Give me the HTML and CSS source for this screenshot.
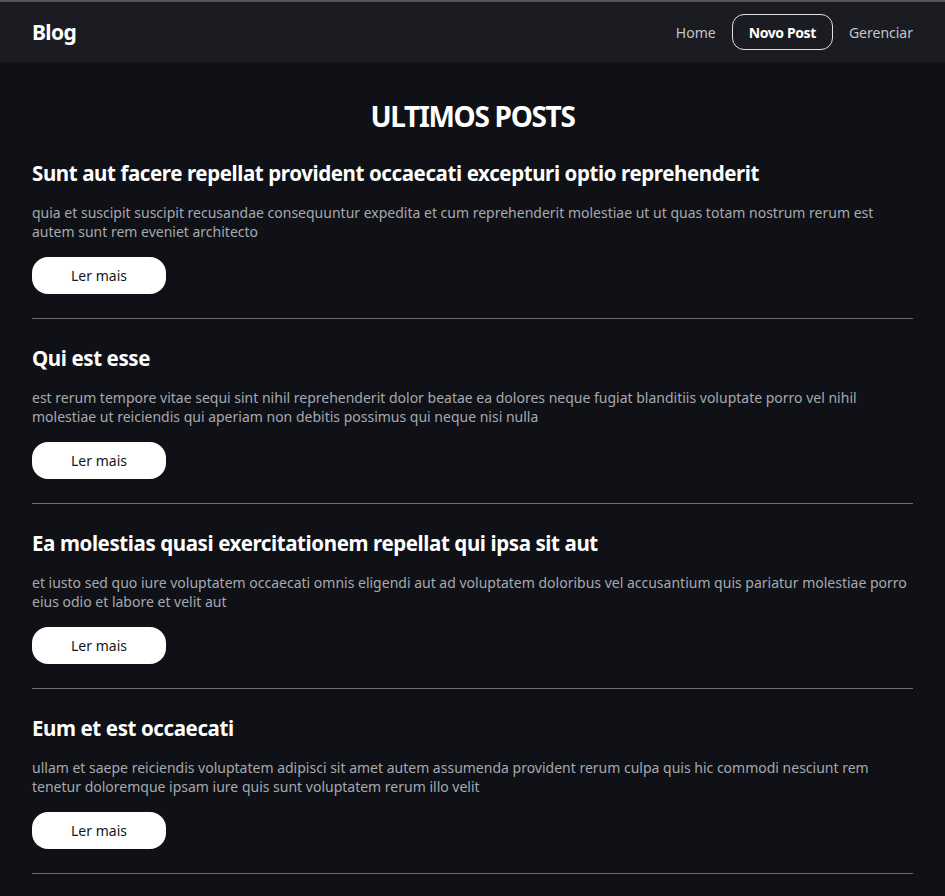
FILE: index.html
```html
<!DOCTYPE html>
<html lang="pt-BR">
<head>
<meta charset="utf-8">
<title>Blog</title>
<link rel="stylesheet" href="styles.css">
</head>
<body>
<header class="topbar">
  <a class="brand" href="#">Blog</a>
  <nav class="nav">
    <a class="nav-link" href="#">Home</a>
    <a class="nav-btn" href="#">Novo Post</a>
    <a class="nav-link" href="#">Gerenciar</a>
  </nav>
</header>
<main class="content">
  <h1 class="page-title">ULTIMOS POSTS</h1>
  <article class="post">
    <h2 class="post-title">Sunt aut facere repellat provident occaecati excepturi optio reprehenderit</h2>
    <p class="post-body">quia et suscipit suscipit recusandae consequuntur expedita et cum reprehenderit molestiae ut ut quas totam nostrum rerum est autem sunt rem eveniet architecto</p>
    <a class="read-more" href="#">Ler mais</a>
  </article>
  <article class="post">
    <h2 class="post-title">Qui est esse</h2>
    <p class="post-body">est rerum tempore vitae sequi sint nihil reprehenderit dolor beatae ea dolores neque fugiat blanditiis voluptate porro vel nihil molestiae ut reiciendis qui aperiam non debitis possimus qui neque nisi nulla</p>
    <a class="read-more" href="#">Ler mais</a>
  </article>
  <article class="post">
    <h2 class="post-title">Ea molestias quasi exercitationem repellat qui ipsa sit aut</h2>
    <p class="post-body">et iusto sed quo iure voluptatem occaecati omnis eligendi aut ad voluptatem doloribus vel accusantium quis pariatur molestiae porro eius odio et labore et velit aut</p>
    <a class="read-more" href="#">Ler mais</a>
  </article>
  <article class="post">
    <h2 class="post-title">Eum et est occaecati</h2>
    <p class="post-body">ullam et saepe reiciendis voluptatem adipisci sit amet autem assumenda provident rerum culpa quis hic commodi nesciunt rem tenetur doloremque ipsam iure quis sunt voluptatem rerum illo velit</p>
    <a class="read-more" href="#">Ler mais</a>
  </article>
</main>
</body>
</html>
```
FILE: styles.css
```css
* { box-sizing: border-box; }
html, body { margin: 0; padding: 0; }
body {
  background: #0f1116;
  color: #ffffff;
  font-family: "Noto Sans", "DejaVu Sans", sans-serif;
}
a { text-decoration: none; color: inherit; }
.topbar {
  height: 62px;
  border-top: 2px solid #55565a;
  background: #1b1c21;
  display: flex;
  align-items: center;
  justify-content: space-between;
  padding: 0 32px;
}
.brand { font-size: 21px; font-weight: 700; color: #fff; letter-spacing: -0.6px; }
.nav { display: flex; align-items: center; gap: 16px; }
.nav-link { font-size: 14px; color: #c4c5c8; }
.nav-btn {
  font-size: 14px; font-weight: 700; color: #fff;
  border: 1px solid #e0e0e0; border-radius: 12px;
  height: 36px; padding: 0 16px;
  display: flex; align-items: center;
  letter-spacing: -0.4px;
}
.content { padding: 0 32px; }
.page-title {
  margin: 36px 0 0;
  font-size: 28px; line-height: 36px; font-weight: 700;
  text-align: center; letter-spacing: -1.3px;
}
.post {
  padding: 25px 0 24px;
  border-bottom: 1px solid #6b6c70;
}
.post-title {
  margin: 0; font-size: 20.5px; line-height: 28px; font-weight: 700;
  letter-spacing: -0.4px;
}
.post-body {
  margin: 16px 0 16px; font-size: 14px; line-height: 19px; color: #a6a9b0;
}
.read-more {
  display: flex; align-items: center; justify-content: center;
  width: 134px; height: 37px; border-radius: 16px;
  background: #fff; color: #15161a; font-size: 14px;
}
```
